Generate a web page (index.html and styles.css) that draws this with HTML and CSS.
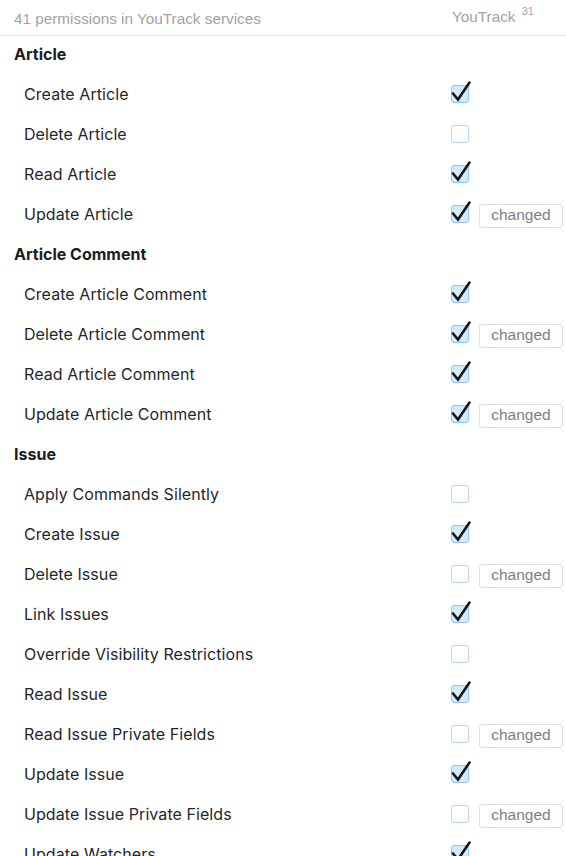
FILE: index.html
```html
<!DOCTYPE html>
<html>
<head>
<meta charset="utf-8">
<link rel="stylesheet" href="styles.css">
</head>
<body>
<div class="page">
  <div class="header">
    <div class="header-title">41 permissions in YouTrack services</div>
    <div class="header-service">YouTrack <sup class="count">31</sup></div>
  </div>

  <div class="group">Article</div>
  <div class="row"><span class="label">Create Article</span><span class="ctrl"><span class="box on"><svg class="tick" viewBox="0 0 18 18"><path d="M2 8.5 L7 14.5 L18.5 -2.5"/></svg></span></span></div>
  <div class="row"><span class="label">Delete Article</span><span class="ctrl"><span class="box"></span></span></div>
  <div class="row"><span class="label">Read Article</span><span class="ctrl"><span class="box on"><svg class="tick" viewBox="0 0 18 18"><path d="M2 8.5 L7 14.5 L18.5 -2.5"/></svg></span></span></div>
  <div class="row"><span class="label">Update Article</span><span class="ctrl"><span class="box on"><svg class="tick" viewBox="0 0 18 18"><path d="M2 8.5 L7 14.5 L18.5 -2.5"/></svg></span><span class="badge">changed</span></span></div>

  <div class="group">Article Comment</div>
  <div class="row"><span class="label">Create Article Comment</span><span class="ctrl"><span class="box on"><svg class="tick" viewBox="0 0 18 18"><path d="M2 8.5 L7 14.5 L18.5 -2.5"/></svg></span></span></div>
  <div class="row"><span class="label">Delete Article Comment</span><span class="ctrl"><span class="box on"><svg class="tick" viewBox="0 0 18 18"><path d="M2 8.5 L7 14.5 L18.5 -2.5"/></svg></span><span class="badge">changed</span></span></div>
  <div class="row"><span class="label">Read Article Comment</span><span class="ctrl"><span class="box on"><svg class="tick" viewBox="0 0 18 18"><path d="M2 8.5 L7 14.5 L18.5 -2.5"/></svg></span></span></div>
  <div class="row"><span class="label">Update Article Comment</span><span class="ctrl"><span class="box on"><svg class="tick" viewBox="0 0 18 18"><path d="M2 8.5 L7 14.5 L18.5 -2.5"/></svg></span><span class="badge">changed</span></span></div>

  <div class="group">Issue</div>
  <div class="row"><span class="label">Apply Commands Silently</span><span class="ctrl"><span class="box"></span></span></div>
  <div class="row"><span class="label">Create Issue</span><span class="ctrl"><span class="box on"><svg class="tick" viewBox="0 0 18 18"><path d="M2 8.5 L7 14.5 L18.5 -2.5"/></svg></span></span></div>
  <div class="row"><span class="label">Delete Issue</span><span class="ctrl"><span class="box"></span><span class="badge">changed</span></span></div>
  <div class="row"><span class="label">Link Issues</span><span class="ctrl"><span class="box on"><svg class="tick" viewBox="0 0 18 18"><path d="M2 8.5 L7 14.5 L18.5 -2.5"/></svg></span></span></div>
  <div class="row"><span class="label">Override Visibility Restrictions</span><span class="ctrl"><span class="box"></span></span></div>
  <div class="row"><span class="label">Read Issue</span><span class="ctrl"><span class="box on"><svg class="tick" viewBox="0 0 18 18"><path d="M2 8.5 L7 14.5 L18.5 -2.5"/></svg></span></span></div>
  <div class="row"><span class="label">Read Issue Private Fields</span><span class="ctrl"><span class="box"></span><span class="badge">changed</span></span></div>
  <div class="row"><span class="label">Update Issue</span><span class="ctrl"><span class="box on"><svg class="tick" viewBox="0 0 18 18"><path d="M2 8.5 L7 14.5 L18.5 -2.5"/></svg></span></span></div>
  <div class="row"><span class="label">Update Issue Private Fields</span><span class="ctrl"><span class="box"></span><span class="badge">changed</span></span></div>
  <div class="row"><span class="label">Update Watchers</span><span class="ctrl"><span class="box on"><svg class="tick" viewBox="0 0 18 18"><path d="M2 8.5 L7 14.5 L18.5 -2.5"/></svg></span></span></div>
</div>
</body>
</html>
```

FILE: styles.css
```css
html, body {
  margin: 0;
  padding: 0;
  background: #fff;
  overflow: hidden;
  height: 856px;
}

.page {
  width: 566px;
  font-family: Inter, "Noto Sans", sans-serif;
  color: #25272c;
}

.header {
  display: flex;
  align-items: center;
  height: 35px;
  border-bottom: 1px solid #e3e3e3;
  font-family: "Liberation Sans", Arial, sans-serif;
  font-size: 15.3px;
  color: #a3a3a3;
}

.header-title {
  flex: 1;
  padding-left: 14px;
  padding-top: 3px;
}

.header-service {
  width: 114px;
  padding-left: 1px;
  padding-bottom: 2px;
}

.count {
  font-size: 11px;
  vertical-align: 0;
  position: relative;
  top: -7px;
  margin-left: 2px;
}

.group {
  height: 36px;
  display: flex;
  align-items: center;
  padding-left: 14px;
  padding-bottom: 4px;
  font-size: 16px;
  font-weight: 700;
  color: #1b1d20;
}

.row {
  height: 40px;
  display: flex;
  align-items: center;
  padding-left: 24px;
  font-size: 16px;
}

.label {
  flex: 1;
  padding-bottom: 4px;
  letter-spacing: 0.07px;
}

.ctrl {
  width: 115px;
  display: flex;
  align-items: center;
  gap: 10px;
}

.box {
  position: relative;
  width: 18px;
  height: 18px;
  box-sizing: border-box;
  border: 1px solid #b8d4ea;
  border-radius: 3px;
  background: #fff;
  margin-top: -4px;
}

.box.on {
  background: #d4ebfd;
  border-color: #8fc6f2;
}

.tick {
  position: absolute;
  left: -1px;
  top: -1px;
  width: 18px;
  height: 18px;
  overflow: visible;
}

.tick path {
  fill: none;
  stroke: #16181b;
  stroke-width: 2.6;
  stroke-linecap: round;
  stroke-linejoin: miter;
}

.badge {
  box-sizing: border-box;
  width: 84px;
  height: 24px;
  border: 1px solid #dcdfe2;
  border-radius: 3px;
  display: flex;
  align-items: center;
  justify-content: center;
  font-family: "Liberation Sans", Arial, sans-serif;
  font-size: 15.5px;
  color: #7b7f84;
  padding-bottom: 2px;
}
```
